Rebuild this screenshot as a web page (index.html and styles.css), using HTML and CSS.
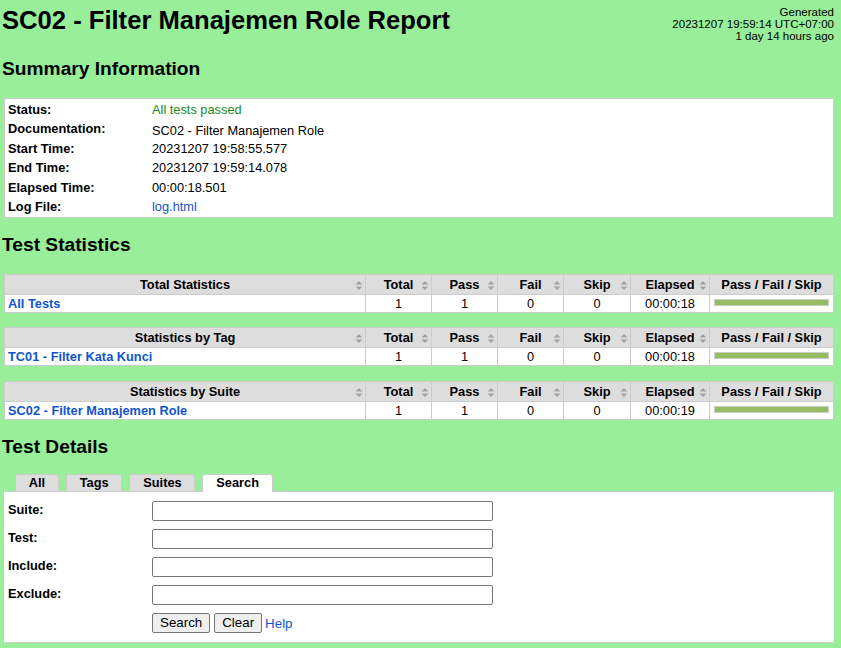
FILE: index.html
```html
<!DOCTYPE html>
<html lang="en">
<head>
<meta charset="utf-8">
<title>SC02 - Filter Manajemen Role Report</title>
<link rel="stylesheet" href="styles.css">
</head>
<body>
<div class="page">
  <header class="top">
    <h1 class="title">SC02 - Filter Manajemen Role Report</h1>
    <div class="generated">Generated<br>20231207 19:59:14 UTC+07:00<br>1 day 14 hours ago</div>
  </header>

  <h2 class="section">Summary Information</h2>
  <table class="summary">
    <tr><th>Status:</th><td class="pass-text">All tests passed</td></tr>
    <tr><th>Documentation:</th><td class="doc">SC02 - Filter Manajemen Role</td></tr>
    <tr><th>Start Time:</th><td>20231207 19:58:55.577</td></tr>
    <tr><th>End Time:</th><td>20231207 19:59:14.078</td></tr>
    <tr><th>Elapsed Time:</th><td>00:00:18.501</td></tr>
    <tr><th>Log File:</th><td><a href="#">log.html</a></td></tr>
  </table>

  <h2 class="section">Test Statistics</h2>

  <table class="stats">
    <colgroup><col><col class="c-num"><col class="c-num"><col class="c-num"><col class="c-skip"><col class="c-elapsed"><col class="c-graph"></colgroup>
    <tr>
      <th class="sortable">Total Statistics<svg class="sort" viewBox="0 0 8 11" width="8" height="11"><path d="M0.5 4.5 L4 1 L7.5 4.5 Z M0.5 6.5 L4 10 L7.5 6.5 Z"/></svg></th>
      <th class="sortable">Total<svg class="sort" viewBox="0 0 8 11" width="8" height="11"><path d="M0.5 4.5 L4 1 L7.5 4.5 Z M0.5 6.5 L4 10 L7.5 6.5 Z"/></svg></th>
      <th class="sortable">Pass<svg class="sort" viewBox="0 0 8 11" width="8" height="11"><path d="M0.5 4.5 L4 1 L7.5 4.5 Z M0.5 6.5 L4 10 L7.5 6.5 Z"/></svg></th>
      <th class="sortable">Fail<svg class="sort" viewBox="0 0 8 11" width="8" height="11"><path d="M0.5 4.5 L4 1 L7.5 4.5 Z M0.5 6.5 L4 10 L7.5 6.5 Z"/></svg></th>
      <th class="sortable">Skip<svg class="sort" viewBox="0 0 8 11" width="8" height="11"><path d="M0.5 4.5 L4 1 L7.5 4.5 Z M0.5 6.5 L4 10 L7.5 6.5 Z"/></svg></th>
      <th class="sortable">Elapsed<svg class="sort" viewBox="0 0 8 11" width="8" height="11"><path d="M0.5 4.5 L4 1 L7.5 4.5 Z M0.5 6.5 L4 10 L7.5 6.5 Z"/></svg></th>
      <th>Pass / Fail / Skip</th>
    </tr>
    <tr>
      <td class="name"><a href="#">All Tests</a></td>
      <td>1</td><td>1</td><td>0</td><td>0</td><td>00:00:18</td>
      <td class="graph-cell"><div class="graph"><div class="pass-bar" style="width:100%"></div></div></td>
    </tr>
  </table>

  <table class="stats">
    <colgroup><col><col class="c-num"><col class="c-num"><col class="c-num"><col class="c-skip"><col class="c-elapsed"><col class="c-graph"></colgroup>
    <tr>
      <th class="sortable">Statistics by Tag<svg class="sort" viewBox="0 0 8 11" width="8" height="11"><path d="M0.5 4.5 L4 1 L7.5 4.5 Z M0.5 6.5 L4 10 L7.5 6.5 Z"/></svg></th>
      <th class="sortable">Total<svg class="sort" viewBox="0 0 8 11" width="8" height="11"><path d="M0.5 4.5 L4 1 L7.5 4.5 Z M0.5 6.5 L4 10 L7.5 6.5 Z"/></svg></th>
      <th class="sortable">Pass<svg class="sort" viewBox="0 0 8 11" width="8" height="11"><path d="M0.5 4.5 L4 1 L7.5 4.5 Z M0.5 6.5 L4 10 L7.5 6.5 Z"/></svg></th>
      <th class="sortable">Fail<svg class="sort" viewBox="0 0 8 11" width="8" height="11"><path d="M0.5 4.5 L4 1 L7.5 4.5 Z M0.5 6.5 L4 10 L7.5 6.5 Z"/></svg></th>
      <th class="sortable">Skip<svg class="sort" viewBox="0 0 8 11" width="8" height="11"><path d="M0.5 4.5 L4 1 L7.5 4.5 Z M0.5 6.5 L4 10 L7.5 6.5 Z"/></svg></th>
      <th class="sortable">Elapsed<svg class="sort" viewBox="0 0 8 11" width="8" height="11"><path d="M0.5 4.5 L4 1 L7.5 4.5 Z M0.5 6.5 L4 10 L7.5 6.5 Z"/></svg></th>
      <th>Pass / Fail / Skip</th>
    </tr>
    <tr>
      <td class="name"><a href="#">TC01 - Filter Kata Kunci</a></td>
      <td>1</td><td>1</td><td>0</td><td>0</td><td>00:00:18</td>
      <td class="graph-cell"><div class="graph"><div class="pass-bar" style="width:100%"></div></div></td>
    </tr>
  </table>

  <table class="stats last">
    <colgroup><col><col class="c-num"><col class="c-num"><col class="c-num"><col class="c-skip"><col class="c-elapsed"><col class="c-graph"></colgroup>
    <tr>
      <th class="sortable">Statistics by Suite<svg class="sort" viewBox="0 0 8 11" width="8" height="11"><path d="M0.5 4.5 L4 1 L7.5 4.5 Z M0.5 6.5 L4 10 L7.5 6.5 Z"/></svg></th>
      <th class="sortable">Total<svg class="sort" viewBox="0 0 8 11" width="8" height="11"><path d="M0.5 4.5 L4 1 L7.5 4.5 Z M0.5 6.5 L4 10 L7.5 6.5 Z"/></svg></th>
      <th class="sortable">Pass<svg class="sort" viewBox="0 0 8 11" width="8" height="11"><path d="M0.5 4.5 L4 1 L7.5 4.5 Z M0.5 6.5 L4 10 L7.5 6.5 Z"/></svg></th>
      <th class="sortable">Fail<svg class="sort" viewBox="0 0 8 11" width="8" height="11"><path d="M0.5 4.5 L4 1 L7.5 4.5 Z M0.5 6.5 L4 10 L7.5 6.5 Z"/></svg></th>
      <th class="sortable">Skip<svg class="sort" viewBox="0 0 8 11" width="8" height="11"><path d="M0.5 4.5 L4 1 L7.5 4.5 Z M0.5 6.5 L4 10 L7.5 6.5 Z"/></svg></th>
      <th class="sortable">Elapsed<svg class="sort" viewBox="0 0 8 11" width="8" height="11"><path d="M0.5 4.5 L4 1 L7.5 4.5 Z M0.5 6.5 L4 10 L7.5 6.5 Z"/></svg></th>
      <th>Pass / Fail / Skip</th>
    </tr>
    <tr>
      <td class="name"><a href="#">SC02 - Filter Manajemen Role</a></td>
      <td>1</td><td>1</td><td>0</td><td>0</td><td>00:00:19</td>
      <td class="graph-cell"><div class="graph"><div class="pass-bar" style="width:100%"></div></div></td>
    </tr>
  </table>

  <h2 class="section">Test Details</h2>
  <div class="tabs">
    <span class="tab">All</span>
    <span class="tab">Tags</span>
    <span class="tab">Suites</span>
    <span class="tab tab-selected">Search</span>
  </div>
  <div class="details">
    <form class="search-form" onsubmit="return false">
      <label class="field-label">Suite:</label><input class="field" type="text">
      <label class="field-label">Test:</label><input class="field" type="text">
      <label class="field-label">Include:</label><input class="field" type="text">
      <label class="field-label">Exclude:</label><input class="field" type="text">
      <span></span>
      <div class="actions"><button class="btn" type="button">Search</button> <button class="btn" type="button">Clear</button> <a href="#" class="help">Help</a></div>
    </form>
  </div>
</div>
</body>
</html>
```

FILE: styles.css
```css
html, body {
  background: #99ee99;
}
body {
  margin: 0;
  font-family: "Liberation Sans", Arial, Helvetica, sans-serif;
  font-size: 12.8px;
  color: #000;
}
a, a:link, a:visited {
  color: #1155cc;
  text-decoration: none;
}
.page {
  padding: 6px 7px 0 4px;
}
.top {
  display: flex;
  justify-content: space-between;
  align-items: flex-start;
  margin-bottom: 2px;
}
.title {
  margin: 0 0 0 -2px;
  font-size: 25.6px;
  font-weight: bold;
  line-height: normal;
}
.generated {
  font-size: 11.52px;
  line-height: 12px;
  text-align: right;
  white-space: nowrap;
}
.section {
  margin: 16px 0 17.5px -2px;
  font-size: 19.2px;
  font-weight: bold;
  line-height: normal;
}

/* Summary */
.summary {
  width: 100%;
  background: #fff;
  border: 1px solid #ccc;
  border-spacing: 0;
  padding-top: 1px;
  table-layout: fixed;
}
.summary th, .summary td {
  padding: 2px 3px;
  line-height: 15.6px;
  text-align: left;
  vertical-align: top;
}
.summary th {
  width: 138px;
  font-weight: bold;
}
.summary .pass-text {
  color: #1a8a1a;
}
.summary .doc {
  padding-top: 3.5px;
  padding-bottom: 0.5px;
}

/* Statistics */
.stats {
  width: 100%;
  table-layout: fixed;
  border-collapse: collapse;
  border: 1px solid #ccc;
  background: #fff;
  margin-bottom: 14.5px;
}
.stats.last {
  margin-bottom: 0;
}
.stats .c-num { width: 66px; }
.stats .c-skip { width: 67px; }
.stats .c-elapsed { width: 79px; }
.stats .c-graph { width: 124px; }
.stats th {
  position: relative;
  background: #dddddd;
  border: 1px solid #ccc;
  font-weight: bold;
  text-align: center;
  padding: 2px 4px;
  line-height: 15px;
  white-space: nowrap;
}
.stats td {
  border: 1px solid #ccc;
  text-align: center;
  padding: 1px 4px;
  line-height: 15px;
  white-space: nowrap;
}
.stats td.name {
  text-align: left;
  font-weight: bold;
  padding-left: 3px;
}
.sort {
  position: absolute;
  right: 2px;
  top: 5px;
  fill: #a3a3a3;
}
.graph-cell {
  vertical-align: top;
}
.graph {
  margin-top: 3px;
  border: 1px solid #ccc;
  height: 5px;
  background: #fff;
}
.pass-bar {
  height: 100%;
  background: #97bd61;
}

/* Details */
.tabs {
  display: flex;
  gap: 7px;
  padding-left: 11px;
  margin-top: -1px;
}
.tab {
  position: relative;
  background: #dddddd;
  border: 1px solid #ccc;
  border-bottom: 0;
  border-radius: 3px 3px 0 0;
  padding: 0 12.8px;
  line-height: 16px;
  font-weight: bold;
}
.tab-selected {
  background: #fff;
  margin-bottom: -1px;
  padding-bottom: 1px;
  z-index: 1;
}
.details {
  background: #fff;
  border: 1px solid #ccc;
  border-left-color: #fff;
  border-right-color: #fff;
  padding: 9px 0 9px 3px;
}
.search-form {
  display: grid;
  grid-template-columns: 144px 341px;
  row-gap: 8px;
  margin: 0;
}
.field-label {
  font-weight: bold;
  padding-top: 1.5px;
  line-height: 14.7px;
}
.field {
  box-sizing: border-box;
  width: 341px;
  height: 20px;
  margin: 0;
  border: 1px solid #767676;
  border-radius: 2px;
  background: #fff;
  padding: 1px 2px;
  font-family: "Liberation Sans", Arial, sans-serif;
  font-size: 13.33px;
}
.actions {
  display: flex;
  align-items: center;
  gap: 4px;
  white-space: nowrap;
}
.btn {
  box-sizing: border-box;
  height: 20px;
  margin: 0;
  padding: 0 7px;
  border: 1px solid #767676;
  border-radius: 2px;
  background: #efefef;
  color: #000;
  font-family: "Liberation Sans", Arial, sans-serif;
  font-size: 13.33px;
  line-height: 18px;
}
.help {
  margin-left: -1px;
  font-size: 13.33px;
}
```
